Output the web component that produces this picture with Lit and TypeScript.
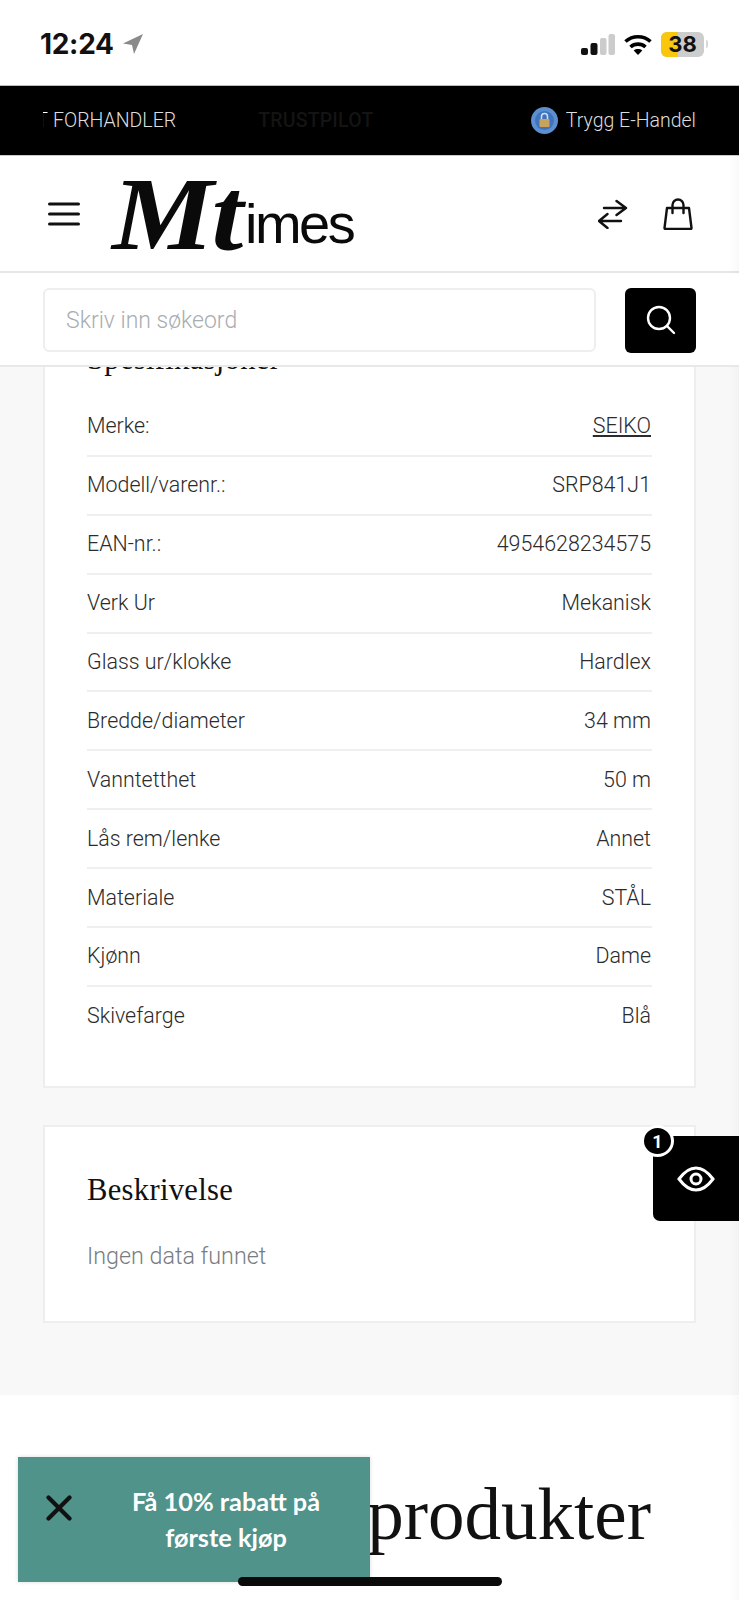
import { LitElement, html, css } from "lit";
import { customElement } from "lit/decorators.js";

const SPECS: [string, string][] = [
  ["Merke:", "SEIKO"],
  ["Modell/varenr.:", "SRP841J1"],
  ["EAN-nr.:", "4954628234575"],
  ["Verk Ur", "Mekanisk"],
  ["Glass ur/klokke", "Hardlex"],
  ["Bredde/diameter", "34 mm"],
  ["Vanntetthet", "50 m"],
  ["Lås rem/lenke", "Annet"],
  ["Materiale", "STÅL"],
  ["Kjønn", "Dame"],
  ["Skivefarge", "Blå"],
];

@customElement("app-root")
export class AppRoot extends LitElement {
  static styles = css`
    :host { display: block; position: relative; width: 739px; height: 1600px; overflow: hidden; background: #fff; font-family: Roboto, "Liberation Sans", sans-serif; color: #2b2b2b; }
    .status { height: 85px; display: flex; align-items: center; padding: 3px 31px 0 40px; box-sizing: border-box; background: #fff; }
    .time { font: 700 28px Inter, Roboto, sans-serif; color: #111; letter-spacing: -0.3px; }
    .loc { margin-left: 9px; }
    .spacer { flex: 1; }
    .sig { display: block; }
    .wifi { display: block; margin-left: 9px; }
    .batt { position: relative; margin-left: 9px; width: 43px; height: 25px; border-radius: 6px; background: #cdcdcd; overflow: hidden; display: flex; align-items: center; justify-content: center; }
    .batt-fill { position: absolute; left: 0; top: 0; bottom: 0; width: 17px; background: #f9c80e; }
    .batt-text { position: relative; font: 700 22px Inter, Roboto, sans-serif; color: #111; }
    .nub { width: 2px; height: 8px; background: #d8d8d8; border-radius: 0 2px 2px 0; margin-left: 2px; }
    .promo { height: 71px; box-sizing: border-box; background: #000; border-top: 1px solid #bbb; border-bottom: 1px solid #ccc; display: flex; align-items: center; padding: 0 43px; color: #ddd; font-weight: 300; font-size: 19.5px; white-space: nowrap; }
    .cut { width: 5px; overflow: hidden; direction: rtl; margin-right: 5px; color: #fff; }
    .tp { margin-left: 82px; color: #141414; font-weight: 500; letter-spacing: 0.2px; }
    .trygg { display: flex; align-items: center; gap: 8px; }
    .header { height: 117px; box-sizing: border-box; background: #fff; border-bottom: 2px solid #e6e6e6; display: flex; align-items: center; padding: 0 46px 0 48px; }
    .logo { display: flex; align-items: flex-end; margin-left: 32px; height: 76px; color: #0a0a0a; }
    .mt { font: italic 700 104px/76px "Liberation Serif", serif; transform: scaleX(1.1); transform-origin: left bottom; width: 133px; letter-spacing: -2px; }
    .imes { font: 400 56px/52px "Liberation Sans", sans-serif; letter-spacing: -2.5px; margin-bottom: 2px; }
    .hicons { display: flex; align-items: center; gap: 35px; }
    .search { height: 94px; box-sizing: border-box; background: #fff; border-bottom: 2px solid #e8e8e8; display: flex; align-items: center; justify-content: space-between; padding: 2px 43px 0; position: relative; z-index: 2; }
    .input { width: 553px; height: 64px; box-sizing: border-box; border: 2px solid #eee; border-radius: 6px; display: flex; align-items: center; padding-left: 21px; font-size: 23px; font-weight: 300; color: #a9adb2; }
    .btn { width: 71px; height: 65px; background: #000; border-radius: 6px; display: flex; align-items: center; justify-content: center; }
    .main { height: 1028px; overflow: hidden; background: #f8f8f8; padding: 0 43px; box-sizing: border-box; }
    .card { background: #fff; border: 2px solid #eee; box-sizing: border-box; padding: 0 42px 0 42px; }
    .specs { margin-top: -30px; height: 751px; }
    h3 { margin: 0; font: 400 30.6px/40px "Liberation Serif", serif; color: #111; letter-spacing: 0.3px; }
    .specs h3 { height: 40px; margin-bottom: 19px; }
    .row { height: 58.9px; box-sizing: border-box; border-bottom: 2px solid #efefef; display: flex; align-items: center; justify-content: space-between; font-size: 21.4px; font-weight: 300; padding: 0 1px 1px 0; }
    .row:last-child { border-bottom: 0; }
    .row a { color: inherit; text-decoration: underline; }
    .desc { margin-top: 37px; height: 198px; padding-top: 43px; }
    .desc p { margin: 32px 0 0; font-size: 23.3px; font-weight: 300; color: #787d82; }
    .bottom { background: #fff; height: 205px; display: flex; justify-content: flex-end; padding: 82px 88px 0 0; box-sizing: border-box; }
    .bottom h2 { margin: 0; font: 400 73px/76px "Liberation Serif", serif; color: #111; }
    .edge { position: absolute; right: 0; top: 156px; bottom: 0; width: 10px; background: linear-gradient(to right, transparent, rgba(0,0,0,.025)); pointer-events: none; }
    .eye { position: absolute; left: 653px; top: 1136px; width: 86px; height: 85px; background: #000; border-radius: 0 0 0 7px; display: flex; align-items: center; justify-content: center; }
    .badge { position: absolute; left: -12px; top: -11px; box-sizing: border-box; width: 33px; height: 32px; background: #000; color: #fff; border: 3px solid #fff; border-radius: 50%; display: flex; align-items: center; justify-content: center; font-size: 18px; font-weight: 700; }
    .toast { position: absolute; left: 18px; top: 1457px; width: 352px; height: 125px; background: #4f938b; display: flex; align-items: center; box-shadow: 0 0 4px rgba(0,0,0,.15); }
    .x { margin: 38px 0 0 28px; flex: none; align-self: flex-start; }
    .toast-text { position: absolute; left: 75px; width: 266px; text-align: center; font: 700 25.3px/35.5px Lato, sans-serif; color: #fff; }
    .home { position: absolute; left: 238px; top: 1577px; width: 264px; height: 9px; border-radius: 5px; background: #0a0a0a; }
  `;

  render() {
    return html`
      <div class="status">
        <span class="time">12:24</span>
        <svg class="loc" width="20" height="20" viewBox="0 0 20 20"><path d="M20 0 0 9.500l9 1.500 2 9z" fill="#8a8a8a"/></svg>
        <span class="spacer"></span>
        <svg class="sig" width="34" height="21" viewBox="0 0 34 21">
          <rect x="0" y="14" width="7" height="7" rx="2" fill="#111"/><rect x="9.500" y="9" width="7" height="12" rx="2" fill="#111"/>
          <rect x="19" y="4" width="6.500" height="17" rx="2" fill="#ccc"/><rect x="27.500" y="0" width="6.500" height="21" rx="2" fill="#ccc"/>
        </svg>
        <svg class="wifi" width="28" height="21" viewBox="0 0 28 21" fill="none" stroke="#000" stroke-width="3.6">
          <path d="M1.500 7.500c7-6.400 18-6.400 25 0"/><path d="M6.500 13c4.300-3.800 10.700-3.800 15 0"/><path d="M14 21l-4.300-4.500c2.500-1.900 6.100-1.900 8.600 0z" fill="#000" stroke="none"/>
        </svg>
        <div class="batt"><span class="batt-fill"></span><span class="batt-text">38</span></div>
        <span class="nub"></span>
      </div>
      <div class="promo">
        <span class="cut">T</span><span>FORHANDLER</span>
        <span class="tp">TRUSTPILOT</span>
        <span class="spacer"></span>
        <span class="trygg">
          <svg width="27" height="27" viewBox="0 0 27 27">
            <circle cx="13.500" cy="13.500" r="13.500" fill="#5b8fd0"/><circle cx="13.500" cy="13.500" r="9.500" fill="#3f74bd"/>
            <path d="M10.500 12V9.500a3 3 0 0 1 6 0V12" fill="none" stroke="#d5dfec" stroke-width="1.500"/>
            <rect x="8.500" y="12" width="10" height="8" rx="1" fill="#c9a25c"/>
          </svg>
          <span>Trygg E-Handel</span>
        </span>
      </div>
      <div class="header">
        <svg width="32" height="24" viewBox="0 0 32 24" stroke="#111" stroke-width="3" stroke-linecap="round"><path d="M1.500 2h29M1.500 12h29M1.500 22h29"/></svg>
        <div class="logo"><span class="mt">Mt</span><span class="imes">imes</span></div>
        <span class="spacer"></span>
        <div class="hicons">
          <svg width="30" height="30" viewBox="0 0 30 30" fill="none" stroke="#111" stroke-width="2.400" stroke-linecap="round" stroke-linejoin="round">
            <path d="M6 9h22M18.500 2 28 9l-9.500 7M23 22H1M9.500 15 1 22l8.500 7" />
          </svg>
          <svg width="30" height="32" viewBox="0 0 30 32" fill="none" stroke="#111" stroke-width="2.400" stroke-linecap="round" stroke-linejoin="round">
            <path d="M4 10h22l2.500 20a1 1 0 0 1-1 1H2.500a1 1 0 0 1-1-1z"/><path d="M9.500 15V7a5.500 5.500 0 0 1 11 0v8"/>
          </svg>
        </div>
      </div>
      <div class="search">
        <div class="input">Skriv inn søkeord</div>
        <div class="btn">
          <svg width="30" height="30" viewBox="0 0 30 30" fill="none" stroke="#fff" stroke-width="2.400" stroke-linecap="round"><circle cx="13" cy="13" r="11"/><path d="M21 21l7 7"/></svg>
        </div>
      </div>
      <div class="main">
        <div class="card specs">
          <h3>Spesifikasjoner</h3>
          ${SPECS.map(([k, v], i) => html`<div class="row"><span>${k}</span>${i === 0 ? html`<a>${v}</a>` : html`<span>${v}</span>`}</div>`)}
        </div>
        <div class="card desc">
          <h3>Beskrivelse</h3>
          <p>Ingen data funnet</p>
        </div>
      </div>
      <div class="bottom"><h2>produkter</h2></div>
      <div class="edge"></div>
      <div class="eye">
        <span class="badge">1</span>
        <svg width="38" height="26" viewBox="0 0 38 26" fill="none" stroke="#fff" stroke-width="3"><path d="M2 13C9 3.500 14 2 19 2s10 1.500 17 11c-7 9.500-12 11-17 11S9 22.500 2 13z"/><circle cx="19" cy="13" r="5"/></svg>
      </div>
      <div class="toast">
        <svg class="x" width="26" height="26" viewBox="0 0 26 26" stroke="#111" stroke-width="4.200" stroke-linecap="round"><path d="M2.500 2.500l21 21M23.500 2.500l-21 21"/></svg>
        <div class="toast-text">Få 10% rabatt på<br />første kjøp</div>
      </div>
      <div class="home"></div>
    `;
  }
}
